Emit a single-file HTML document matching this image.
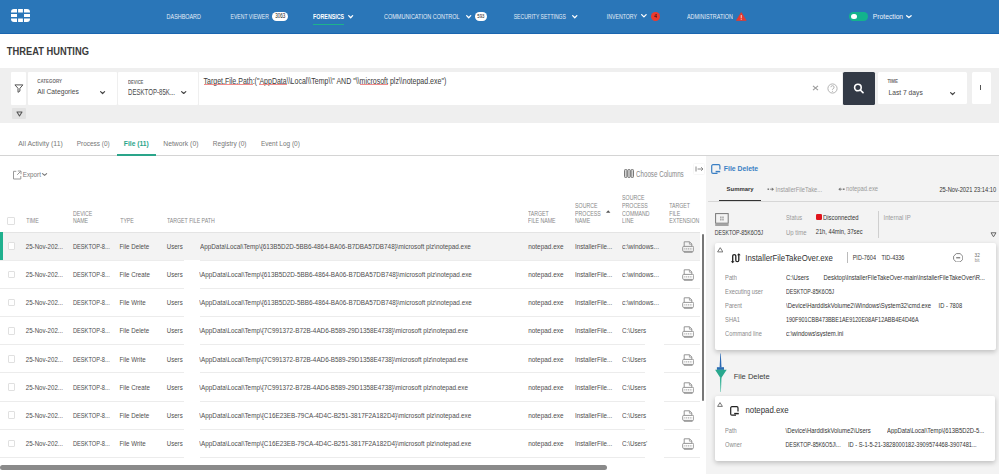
<!DOCTYPE html>
<html><head><meta charset="utf-8">
<style>
*{margin:0;padding:0;box-sizing:border-box}
html,body{width:999px;height:474px;overflow:hidden;background:#fff;font-family:"Liberation Sans",sans-serif;color:#444}
.a{position:absolute}
.t{position:absolute;white-space:nowrap;line-height:1;transform-origin:0 0}
</style></head><body>
<div class="a" style="left:0px;top:0px;width:999px;height:33px;background:#2a76b8;"></div>
<div class="a" style="left:0px;top:33px;width:999px;height:1px;background:#1a66b0;"></div>
<svg class="a" style="left:11px;top:9px" width="19" height="13" viewBox="0 0 19 13"><path d="M0 3.4V3A3 3 0 0 1 3 0H6V3.4Z M7.1 0H11.9V3.4H7.1Z M13 0H16A3 3 0 0 1 19 3V3.4H13Z M0 4.9H6V8.1H0Z M13 4.9H19V8.1H13Z M0 9.6H6V13H3A3 3 0 0 1 0 10Z M7.1 9.6H11.9V13H7.1Z M13 9.6H19V10A3 3 0 0 1 16 13H13Z" fill="#fff"/></svg>
<div class="t" style="left:166.60px;top:13.54px;font-size:5.430px;color:#e4edf7;transform:scaleY(1.334);">DASHBOARD</div>
<div class="t" style="left:230.60px;top:13.04px;font-size:5.093px;color:#e4edf7;transform:scaleY(1.423);">EVENT VIEWER</div>
<div class="a" style="left:271.8px;top:12px;width:16.2px;height:9.2px;background:#fff;border-radius:5px"></div>
<div class="t" style="left:275.30px;top:13.95px;font-size:4.539px;color:#222;transform:scaleY(1.450);">3063</div>
<div class="t" style="left:313.10px;top:13.69px;font-size:5.347px;color:#fff;font-weight:bold;transform:scaleY(1.301);">FORENSICS</div>
<svg class="a" style="left:347px;top:13.5px" width="7.300000000000011" height="5.399999999999999" viewBox="-1 -1 7.300000000000011 5.399999999999999"><path d="M0.65 0.65L2.6500000000000057 2.7499999999999987L4.650000000000011 0.65" fill="none" stroke="#fff" stroke-width="1.3" stroke-linecap="round" stroke-linejoin="round"/></svg>
<div class="a" style="left:313.3px;top:23.8px;width:31px;height:1.3px;background:#1db38b;"></div>
<div class="t" style="left:384.00px;top:13.54px;font-size:5.509px;color:#e4edf7;transform:scaleY(1.315);">COMMUNICATION CONTROL</div>
<svg class="a" style="left:464.7px;top:13.5px" width="7.400000000000034" height="5.399999999999999" viewBox="-1 -1 7.400000000000034 5.399999999999999"><path d="M0.65 0.65L2.700000000000017 2.7499999999999987L4.750000000000034 0.65" fill="none" stroke="#fff" stroke-width="1.3" stroke-linecap="round" stroke-linejoin="round"/></svg>
<div class="a" style="left:474.5px;top:11.8px;width:12.6px;height:9.3px;background:#fff;border-radius:5px"></div>
<div class="t" style="left:477.30px;top:14.00px;font-size:4.311px;color:#222;transform:scaleY(1.450);">593</div>
<div class="t" style="left:513.75px;top:13.04px;font-size:5.065px;color:#e4edf7;transform:scaleY(1.431);">SECURITY SETTINGS</div>
<svg class="a" style="left:570.5px;top:13.5px" width="7.5" height="5.399999999999999" viewBox="-1 -1 7.5 5.399999999999999"><path d="M0.65 0.65L2.75 2.7499999999999987L4.85 0.65" fill="none" stroke="#fff" stroke-width="1.3" stroke-linecap="round" stroke-linejoin="round"/></svg>
<div class="t" style="left:606.80px;top:13.04px;font-size:5.207px;color:#e4edf7;transform:scaleY(1.392);">INVENTORY</div>
<svg class="a" style="left:640.3px;top:13.3px" width="7.800000000000068" height="5.5" viewBox="-1 -1 7.800000000000068 5.5"><path d="M0.65 0.65L2.900000000000034 2.85L5.150000000000068 0.65" fill="none" stroke="#fff" stroke-width="1.3" stroke-linecap="round" stroke-linejoin="round"/></svg>
<div class="a" style="left:650.5px;top:11.75px;width:9.5px;height:9.5px;background:#ec3a2e;border-radius:50%"></div>
<div class="t" style="left:654.00px;top:14.32px;font-size:5.405px;color:#2a0a0a;transform:scaleY(1.019);">4</div>
<div class="t" style="left:687.00px;top:13.54px;font-size:5.425px;color:#e4edf7;transform:scaleY(1.336);">ADMINISTRATION</div>
<svg class="a" style="left:736px;top:11.5px" width="10.5" height="9" viewBox="0 0 10.5 9"><path d="M5.25 0.5L10.2 8.5H0.3Z" fill="#e8392e" stroke="#e8392e" stroke-width="0.6" stroke-linejoin="round"/><rect x="4.75" y="3" width="1" height="3.2" fill="#f6c9c4"/><rect x="4.75" y="6.8" width="1" height="1" fill="#f6c9c4"/></svg>
<div class="a" style="left:849.2px;top:12.4px;width:18.8px;height:8.4px;background:#13b38d;border-radius:4.2px"></div>
<div class="a" style="left:851.2px;top:13.6px;width:5.9px;height:5.9px;background:#fff;border-radius:50%"></div>
<div class="t" style="left:872.80px;top:13.09px;font-size:6.748px;color:#eef3fa;transform:scaleY(1.117);">Protection</div>
<svg class="a" style="left:905.2px;top:13.8px" width="7.7999999999999545" height="5.199999999999999" viewBox="-1 -1 7.7999999999999545 5.199999999999999"><path d="M0.65 0.65L2.8999999999999773 2.5499999999999994L5.149999999999954 0.65" fill="none" stroke="#fff" stroke-width="1.3" stroke-linecap="round" stroke-linejoin="round"/></svg>
<div class="t" style="left:6.80px;top:46.51px;font-size:9.325px;color:#3b3b3b;font-weight:bold;transform:scaleY(1.135);">THREAT HUNTING</div>
<div class="a" style="left:0px;top:67.5px;width:999px;height:55.2px;background:#efefef;"></div>
<div class="a" style="left:11.3px;top:72px;width:14.7px;height:32.5px;background:#fff;border-radius:1px"></div>
<svg class="a" style="left:14px;top:84px" width="10" height="9" viewBox="0 0 10 9"><path d="M0.9 0.9H8.9L5.9 4.3V7.1L4 8.3V4.3Z" fill="none" stroke="#555" stroke-width="1" stroke-linejoin="round"/></svg>
<div class="a" style="left:27.8px;top:72px;width:89px;height:32.5px;background:#fff;border-radius:1px"></div>
<div class="t" style="left:37.20px;top:79.91px;font-size:4.464px;color:#707070;font-weight:bold;transform:scaleY(1.104);">CATEGORY</div>
<div class="t" style="left:37.20px;top:88.17px;font-size:6.715px;color:#4a4a4a;transform:scaleY(1.144);">All Categories</div>
<svg class="a" style="left:99.3px;top:89.6px" width="7.200000000000003" height="5.1000000000000085" viewBox="-1 -1 7.200000000000003 5.1000000000000085"><path d="M0.6 0.6L2.6000000000000014 2.5000000000000084L4.600000000000003 0.6" fill="none" stroke="#444" stroke-width="1.2" stroke-linecap="round" stroke-linejoin="round"/></svg>
<div class="a" style="left:118px;top:72px;width:79.6px;height:32.5px;background:#fff;border-radius:1px"></div>
<div class="t" style="left:128.00px;top:79.91px;font-size:4.134px;color:#707070;font-weight:bold;transform:scaleY(1.192);">DEVICE</div>
<div class="t" style="left:128.00px;top:87.81px;font-size:6.100px;color:#4a4a4a;transform:scaleY(1.426);">DESKTOP-85K...</div>
<svg class="a" style="left:180px;top:89.6px" width="7.400000000000006" height="5.1000000000000085" viewBox="-1 -1 7.400000000000006 5.1000000000000085"><path d="M0.6 0.6L2.700000000000003 2.5000000000000084L4.800000000000006 0.6" fill="none" stroke="#444" stroke-width="1.2" stroke-linecap="round" stroke-linejoin="round"/></svg>
<div class="a" style="left:198.9px;top:72px;width:643.5px;height:32.5px;background:#fff;"></div>
<div class="t" style="left:203.50px;top:76.91px;font-size:7.025px;color:#3a3a3a;transform:scaleY(1.238);">Target.File.Path:(&quot;AppData\\Local\\Temp\\&quot; AND &quot;\\microsoft plz\\notepad.exe&quot;)</div>
<div class="a" style="left:203.5px;top:84px;width:49.2px;height:0.9px;background:#f08a8a;"></div>
<div class="a" style="left:259.49px;top:84px;width:27.34px;height:0.9px;background:#f08a8a;"></div>
<div class="a" style="left:359.75px;top:84px;width:28.5px;height:0.9px;background:#f08a8a;"></div>
<svg class="a" style="left:812px;top:85px" width="7" height="6" viewBox="0 0 7 6"><path d="M1 0.8L6 5.2M6 0.8L1 5.2" stroke="#999" stroke-width="1.1"/></svg>
<svg class="a" style="left:826.5px;top:82.8px" width="11" height="11" viewBox="0 0 11 11"><circle cx="5.5" cy="5.5" r="4.6" fill="none" stroke="#aaa" stroke-width="0.9"/><path d="M3.9 4.2A1.6 1.6 0 1 1 5.9 5.8C5.5 6 5.5 6.3 5.5 6.9" fill="none" stroke="#aaa" stroke-width="0.9"/><circle cx="5.5" cy="8.2" r="0.55" fill="#aaa"/></svg>
<div class="a" style="left:842.7px;top:72px;width:32.4px;height:32.6px;background:#333a46;border-radius:1.5px"></div>
<svg class="a" style="left:852px;top:82px" width="13" height="12" viewBox="0 0 13 12"><circle cx="5.9" cy="5.5" r="3.3" fill="none" stroke="#fff" stroke-width="1.6"/><path d="M8.3 8L11 10.6" stroke="#fff" stroke-width="1.7" stroke-linecap="round"/></svg>
<div class="a" style="left:878.1px;top:72.2px;width:88.7px;height:32.3px;background:#fff;border-radius:1.5px"></div>
<div class="t" style="left:887.40px;top:80.26px;font-size:4.435px;color:#707070;font-weight:bold;transform:scaleY(1.046);">TIME</div>
<div class="t" style="left:888.60px;top:89.37px;font-size:6.686px;color:#4a4a4a;transform:scaleY(1.149);">Last 7 days</div>
<svg class="a" style="left:948.8px;top:90.7px" width="7.2000000000000455" height="5.099999999999994" viewBox="-1 -1 7.2000000000000455 5.099999999999994"><path d="M0.6 0.6L2.6000000000000227 2.4999999999999942L4.600000000000046 0.6" fill="none" stroke="#444" stroke-width="1.2" stroke-linecap="round" stroke-linejoin="round"/></svg>
<div class="a" style="left:971.8px;top:72.2px;width:18.8px;height:32.3px;background:#fff;border-radius:1.5px"></div>
<div class="a" style="left:979.7px;top:84.9px;width:1.2px;height:5px;background:#555;"></div>
<div class="a" style="left:11.8px;top:108.3px;width:13.9px;height:10.6px;background:#e2e2e2;border-radius:1px"></div>
<svg class="a" style="left:15.5px;top:111px" width="7" height="6" viewBox="0 0 7 6"><path d="M1 1H6L3.5 5Z" fill="none" stroke="#555" stroke-width="1.1" stroke-linejoin="round"/></svg>
<div class="t" style="left:18.30px;top:140.99px;font-size:6.877px;color:#777;transform:scaleY(1.012);">All Activity (11)</div>
<div class="t" style="left:76.80px;top:140.49px;font-size:6.452px;color:#777;transform:scaleY(1.168);">Process (0)</div>
<div class="t" style="left:123.80px;top:140.49px;font-size:6.738px;color:#2aa58a;font-weight:bold;transform:scaleY(1.118);">File (11)</div>
<div class="t" style="left:163.30px;top:140.49px;font-size:6.809px;color:#777;transform:scaleY(1.107);">Network (0)</div>
<div class="t" style="left:212.80px;top:140.49px;font-size:6.538px;color:#777;transform:scaleY(1.153);">Registry (0)</div>
<div class="t" style="left:260.90px;top:140.49px;font-size:6.495px;color:#777;transform:scaleY(1.160);">Event Log (0)</div>
<div class="a" style="left:0px;top:155px;width:999px;height:1px;background:#d4d4d4;"></div>
<div class="a" style="left:116.9px;top:153.8px;width:39.1px;height:2px;background:#2aa58a;"></div>
<svg class="a" style="left:12px;top:170px" width="10" height="10" viewBox="0 0 10 10"><path d="M4.3 1.3H1.5V9H8.8V6" fill="none" stroke="#999" stroke-width="1"/><path d="M5.8 1H9V4.2M9 1L5.2 4.8" fill="none" stroke="#999" stroke-width="1"/></svg>
<div class="t" style="left:22.75px;top:171.94px;font-size:6.315px;color:#7a7a7a;">Export</div>
<svg class="a" style="left:41.2px;top:172.3px" width="7.199999999999996" height="4.899999999999977" viewBox="-1 -1 7.199999999999996 4.899999999999977"><path d="M0.55 0.55L2.599999999999998 2.3499999999999774L4.649999999999996 0.55" fill="none" stroke="#777" stroke-width="1.1" stroke-linecap="round" stroke-linejoin="round"/></svg>
<svg class="a" style="left:624px;top:169px" width="10" height="9" viewBox="0 0 10 9"><rect x="0.5" y="0.5" width="2.5" height="8" rx="0.9" fill="#d4d4d4" stroke="#777" stroke-width="1"/><rect x="3.75" y="0.5" width="2.5" height="8" rx="0.9" fill="#d4d4d4" stroke="#777" stroke-width="1"/><rect x="7" y="0.5" width="2.5" height="8" rx="0.9" fill="#d4d4d4" stroke="#777" stroke-width="1"/></svg>
<div class="t" style="left:636.00px;top:170.36px;font-size:6.232px;color:#888;transform:scaleY(1.349);">Choose Columns</div>
<div class="a" style="left:7.2px;top:217.2px;width:7.6px;height:7.6px;background:#fff;border:1px solid #e0e0e0;border-radius:1px"></div>
<div class="t" style="left:167.00px;top:218.46px;font-size:5.235px;color:#888;transform:scaleY(1.246);">TARGET FILE PATH</div>
<div class="t" style="left:26.20px;top:218.48px;font-size:5.235px;color:#888;transform:scaleY(1.218);">TIME</div>
<div class="t" style="left:72.90px;top:210.88px;font-size:5.235px;color:#888;transform:scaleY(1.218);">DEVICE</div>
<div class="t" style="left:72.90px;top:218.48px;font-size:5.235px;color:#888;transform:scaleY(1.218);">NAME</div>
<div class="t" style="left:120.20px;top:218.48px;font-size:5.235px;color:#888;transform:scaleY(1.218);">TYPE</div>
<div class="t" style="left:528.00px;top:210.88px;font-size:5.235px;color:#888;transform:scaleY(1.218);">TARGET</div>
<div class="t" style="left:528.00px;top:218.48px;font-size:5.235px;color:#888;transform:scaleY(1.218);">FILE NAME</div>
<div class="t" style="left:575.10px;top:203.08px;font-size:5.235px;color:#888;transform:scaleY(1.218);">SOURCE</div>
<div class="t" style="left:575.10px;top:210.88px;font-size:5.235px;color:#888;transform:scaleY(1.218);">PROCESS</div>
<div class="t" style="left:575.10px;top:218.48px;font-size:5.235px;color:#888;transform:scaleY(1.218);">NAME</div>
<svg class="a" style="left:606.3px;top:209.6px" width="4.4" height="3" viewBox="0 0 4.4 3"><path d="M0 2.8L2.2 0.2L4.4 2.8Z" fill="#555"/></svg>
<div class="t" style="left:622.10px;top:195.38px;font-size:5.235px;color:#888;transform:scaleY(1.218);">SOURCE</div>
<div class="t" style="left:622.10px;top:203.08px;font-size:5.235px;color:#888;transform:scaleY(1.218);">PROCESS</div>
<div class="t" style="left:622.10px;top:210.88px;font-size:5.235px;color:#888;transform:scaleY(1.218);">COMMAND</div>
<div class="t" style="left:622.10px;top:218.48px;font-size:5.235px;color:#888;transform:scaleY(1.218);">LINE</div>
<div class="t" style="left:669.20px;top:203.08px;font-size:5.235px;color:#888;transform:scaleY(1.218);">TARGET</div>
<div class="t" style="left:669.20px;top:210.88px;font-size:5.235px;color:#888;transform:scaleY(1.218);">FILE</div>
<div class="t" style="left:669.20px;top:218.48px;font-size:5.235px;color:#888;transform:scaleY(1.218);">EXTENSION</div>
<div class="a" style="left:0px;top:231.8px;width:700px;height:1px;background:#e4e4e4;"></div>
<div class="a" style="left:0px;top:232.8px;width:700px;height:27.4px;background:#f3f3f3;"></div>
<div class="a" style="left:0px;top:231.8px;width:3px;height:28.4px;background:#1fb08e;"></div>
<div class="a" style="left:0px;top:259.68px;width:183.5px;height:1px;background:#ececec;"></div>
<div class="a" style="left:199.5px;top:259.68px;width:500.5px;height:1px;background:#ececec;"></div>
<div class="a" style="left:7.8px;top:242.4px;width:7.6px;height:7.6px;background:#fff;border:1px solid #e0e0e0;border-radius:1px"></div>
<div class="t" style="left:25.80px;top:242.94px;font-size:6.139px;color:#4e4e4e;transform:scaleY(1.180);">25-Nov-202...</div>
<div class="t" style="left:72.90px;top:243.84px;font-size:5.705px;color:#4e4e4e;transform:scaleY(1.270);">DESKTOP-8...</div>
<div class="t" style="left:119.60px;top:242.94px;font-size:6.192px;color:#4e4e4e;transform:scaleY(1.170);">File Delete</div>
<div class="t" style="left:166.80px;top:242.94px;font-size:6.092px;color:#4e4e4e;transform:scaleY(1.189);">Users</div>
<div class="t" style="left:200.00px;top:242.94px;font-size:6.357px;color:#4e4e4e;transform:scaleY(1.140);">AppData\Local\Temp\{613B5D2D-5BB6-4864-BA06-B7DBA57DB748}\microsoft plz\notepad.exe</div>
<div class="t" style="left:528.20px;top:242.94px;font-size:6.431px;color:#4e4e4e;transform:scaleY(1.127);">notepad.exe</div>
<div class="t" style="left:575.00px;top:242.94px;font-size:6.274px;color:#4e4e4e;transform:scaleY(1.155);">InstallerFile...</div>
<div class="t" style="left:622.00px;top:242.94px;font-size:6.463px;color:#4e4e4e;transform:scaleY(1.121);">c:\windows...</div>
<svg class="a" style="left:681.5px;top:241.0px" width="12.5" height="12" viewBox="0 0 12.5 12"><path d="M2.2 5.2V0.8H7.6L9.8 3V5.2" fill="none" stroke="#8a8a8a" stroke-width="0.9"/><path d="M7.4 0.8V3.2H9.8" fill="none" stroke="#8a8a8a" stroke-width="0.7"/><rect x="0.7" y="5.4" width="11" height="5" rx="1" fill="none" stroke="#8a8a8a" stroke-width="0.9"/><path d="M2.3 7.9H10.2" stroke="#8a8a8a" stroke-width="0.9" stroke-dasharray="1.1 0.7"/><path d="M2.2 10.6V11.4H10.3V10.6" fill="none" stroke="#8a8a8a" stroke-width="0.8"/></svg>
<div class="a" style="left:0px;top:287.86px;width:183.5px;height:1px;background:#ececec;"></div>
<div class="a" style="left:199.5px;top:287.86px;width:500.5px;height:1px;background:#ececec;"></div>
<div class="a" style="left:7.8px;top:270.58px;width:7.6px;height:7.6px;background:#fff;border:1px solid #e0e0e0;border-radius:1px"></div>
<div class="t" style="left:25.80px;top:271.12px;font-size:6.139px;color:#4e4e4e;transform:scaleY(1.180);">25-Nov-202...</div>
<div class="t" style="left:72.90px;top:272.02px;font-size:5.705px;color:#4e4e4e;transform:scaleY(1.270);">DESKTOP-8...</div>
<div class="t" style="left:119.60px;top:271.12px;font-size:6.192px;color:#4e4e4e;transform:scaleY(1.170);">File Create</div>
<div class="t" style="left:166.80px;top:271.12px;font-size:6.092px;color:#4e4e4e;transform:scaleY(1.189);">Users</div>
<div class="t" style="left:199.30px;top:271.12px;font-size:6.357px;color:#4e4e4e;transform:scaleY(1.140);">\AppData\Local\Temp\{613B5D2D-5BB6-4864-BA06-B7DBA57DB748}\microsoft plz\notepad.exe</div>
<div class="t" style="left:528.20px;top:271.12px;font-size:6.431px;color:#4e4e4e;transform:scaleY(1.127);">notepad.exe</div>
<div class="t" style="left:575.00px;top:271.12px;font-size:6.274px;color:#4e4e4e;transform:scaleY(1.155);">InstallerFile...</div>
<div class="t" style="left:622.00px;top:271.12px;font-size:6.463px;color:#4e4e4e;transform:scaleY(1.121);">c:\windows...</div>
<svg class="a" style="left:681.5px;top:269.2px" width="12.5" height="12" viewBox="0 0 12.5 12"><path d="M2.2 5.2V0.8H7.6L9.8 3V5.2" fill="none" stroke="#8a8a8a" stroke-width="0.9"/><path d="M7.4 0.8V3.2H9.8" fill="none" stroke="#8a8a8a" stroke-width="0.7"/><rect x="0.7" y="5.4" width="11" height="5" rx="1" fill="none" stroke="#8a8a8a" stroke-width="0.9"/><path d="M2.3 7.9H10.2" stroke="#8a8a8a" stroke-width="0.9" stroke-dasharray="1.1 0.7"/><path d="M2.2 10.6V11.4H10.3V10.6" fill="none" stroke="#8a8a8a" stroke-width="0.8"/></svg>
<div class="a" style="left:0px;top:316.03999999999996px;width:183.5px;height:1px;background:#ececec;"></div>
<div class="a" style="left:199.5px;top:316.03999999999996px;width:500.5px;height:1px;background:#ececec;"></div>
<div class="a" style="left:7.8px;top:298.76px;width:7.6px;height:7.6px;background:#fff;border:1px solid #e0e0e0;border-radius:1px"></div>
<div class="t" style="left:25.80px;top:299.30px;font-size:6.139px;color:#4e4e4e;transform:scaleY(1.180);">25-Nov-202...</div>
<div class="t" style="left:72.90px;top:300.20px;font-size:5.705px;color:#4e4e4e;transform:scaleY(1.270);">DESKTOP-8...</div>
<div class="t" style="left:119.60px;top:299.30px;font-size:6.192px;color:#4e4e4e;transform:scaleY(1.170);">File Write</div>
<div class="t" style="left:166.80px;top:299.30px;font-size:6.092px;color:#4e4e4e;transform:scaleY(1.189);">Users</div>
<div class="t" style="left:199.30px;top:299.30px;font-size:6.357px;color:#4e4e4e;transform:scaleY(1.140);">\AppData\Local\Temp\{613B5D2D-5BB6-4864-BA06-B7DBA57DB748}\microsoft plz\notepad.exe</div>
<div class="t" style="left:528.20px;top:299.30px;font-size:6.431px;color:#4e4e4e;transform:scaleY(1.127);">notepad.exe</div>
<div class="t" style="left:575.00px;top:299.30px;font-size:6.274px;color:#4e4e4e;transform:scaleY(1.155);">InstallerFile...</div>
<div class="t" style="left:622.00px;top:299.30px;font-size:6.463px;color:#4e4e4e;transform:scaleY(1.121);">c:\windows...</div>
<svg class="a" style="left:681.5px;top:297.4px" width="12.5" height="12" viewBox="0 0 12.5 12"><path d="M2.2 5.2V0.8H7.6L9.8 3V5.2" fill="none" stroke="#8a8a8a" stroke-width="0.9"/><path d="M7.4 0.8V3.2H9.8" fill="none" stroke="#8a8a8a" stroke-width="0.7"/><rect x="0.7" y="5.4" width="11" height="5" rx="1" fill="none" stroke="#8a8a8a" stroke-width="0.9"/><path d="M2.3 7.9H10.2" stroke="#8a8a8a" stroke-width="0.9" stroke-dasharray="1.1 0.7"/><path d="M2.2 10.6V11.4H10.3V10.6" fill="none" stroke="#8a8a8a" stroke-width="0.8"/></svg>
<div class="a" style="left:0px;top:344.22px;width:183.5px;height:1px;background:#ececec;"></div>
<div class="a" style="left:199.5px;top:344.22px;width:445.5px;height:1px;background:#ececec;"></div>
<div class="a" style="left:663.5px;top:344.22px;width:36.5px;height:1px;background:#ececec;"></div>
<div class="a" style="left:7.8px;top:326.94px;width:7.6px;height:7.6px;background:#fff;border:1px solid #e0e0e0;border-radius:1px"></div>
<div class="t" style="left:25.80px;top:327.48px;font-size:6.139px;color:#4e4e4e;transform:scaleY(1.180);">25-Nov-202...</div>
<div class="t" style="left:72.90px;top:328.38px;font-size:5.705px;color:#4e4e4e;transform:scaleY(1.270);">DESKTOP-8...</div>
<div class="t" style="left:119.60px;top:327.48px;font-size:6.192px;color:#4e4e4e;transform:scaleY(1.170);">File Delete</div>
<div class="t" style="left:166.80px;top:327.48px;font-size:6.092px;color:#4e4e4e;transform:scaleY(1.189);">Users</div>
<div class="t" style="left:199.30px;top:327.48px;font-size:6.357px;color:#4e4e4e;transform:scaleY(1.140);">\AppData\Local\Temp\{7C991372-B72B-4AD6-B589-29D1358E4738}\microsoft plz\notepad.exe</div>
<div class="t" style="left:528.20px;top:327.48px;font-size:6.431px;color:#4e4e4e;transform:scaleY(1.127);">notepad.exe</div>
<div class="t" style="left:575.00px;top:327.48px;font-size:6.274px;color:#4e4e4e;transform:scaleY(1.155);">InstallerFile...</div>
<div class="t" style="left:622.00px;top:327.48px;font-size:6.200px;color:#4e4e4e;transform:scaleY(1.169);">C:\Users</div>
<svg class="a" style="left:681.5px;top:325.5px" width="12.5" height="12" viewBox="0 0 12.5 12"><path d="M2.2 5.2V0.8H7.6L9.8 3V5.2" fill="none" stroke="#8a8a8a" stroke-width="0.9"/><path d="M7.4 0.8V3.2H9.8" fill="none" stroke="#8a8a8a" stroke-width="0.7"/><rect x="0.7" y="5.4" width="11" height="5" rx="1" fill="none" stroke="#8a8a8a" stroke-width="0.9"/><path d="M2.3 7.9H10.2" stroke="#8a8a8a" stroke-width="0.9" stroke-dasharray="1.1 0.7"/><path d="M2.2 10.6V11.4H10.3V10.6" fill="none" stroke="#8a8a8a" stroke-width="0.8"/></svg>
<div class="a" style="left:0px;top:372.4px;width:183.5px;height:1px;background:#ececec;"></div>
<div class="a" style="left:199.5px;top:372.4px;width:445.5px;height:1px;background:#ececec;"></div>
<div class="a" style="left:663.5px;top:372.4px;width:36.5px;height:1px;background:#ececec;"></div>
<div class="a" style="left:7.8px;top:355.12px;width:7.6px;height:7.6px;background:#fff;border:1px solid #e0e0e0;border-radius:1px"></div>
<div class="t" style="left:25.80px;top:355.66px;font-size:6.139px;color:#4e4e4e;transform:scaleY(1.180);">25-Nov-202...</div>
<div class="t" style="left:72.90px;top:356.56px;font-size:5.705px;color:#4e4e4e;transform:scaleY(1.270);">DESKTOP-8...</div>
<div class="t" style="left:119.60px;top:355.66px;font-size:6.192px;color:#4e4e4e;transform:scaleY(1.170);">File Write</div>
<div class="t" style="left:166.80px;top:355.66px;font-size:6.092px;color:#4e4e4e;transform:scaleY(1.189);">Users</div>
<div class="t" style="left:199.30px;top:355.66px;font-size:6.357px;color:#4e4e4e;transform:scaleY(1.140);">\AppData\Local\Temp\{7C991372-B72B-4AD6-B589-29D1358E4738}\microsoft plz\notepad.exe</div>
<div class="t" style="left:528.20px;top:355.66px;font-size:6.431px;color:#4e4e4e;transform:scaleY(1.127);">notepad.exe</div>
<div class="t" style="left:575.00px;top:355.66px;font-size:6.274px;color:#4e4e4e;transform:scaleY(1.155);">InstallerFile...</div>
<div class="t" style="left:622.00px;top:355.66px;font-size:6.200px;color:#4e4e4e;transform:scaleY(1.169);">C:\Users</div>
<svg class="a" style="left:681.5px;top:353.7px" width="12.5" height="12" viewBox="0 0 12.5 12"><path d="M2.2 5.2V0.8H7.6L9.8 3V5.2" fill="none" stroke="#8a8a8a" stroke-width="0.9"/><path d="M7.4 0.8V3.2H9.8" fill="none" stroke="#8a8a8a" stroke-width="0.7"/><rect x="0.7" y="5.4" width="11" height="5" rx="1" fill="none" stroke="#8a8a8a" stroke-width="0.9"/><path d="M2.3 7.9H10.2" stroke="#8a8a8a" stroke-width="0.9" stroke-dasharray="1.1 0.7"/><path d="M2.2 10.6V11.4H10.3V10.6" fill="none" stroke="#8a8a8a" stroke-width="0.8"/></svg>
<div class="a" style="left:0px;top:400.58px;width:183.5px;height:1px;background:#ececec;"></div>
<div class="a" style="left:199.5px;top:400.58px;width:445.5px;height:1px;background:#ececec;"></div>
<div class="a" style="left:663.5px;top:400.58px;width:36.5px;height:1px;background:#ececec;"></div>
<div class="a" style="left:7.8px;top:383.3px;width:7.6px;height:7.6px;background:#fff;border:1px solid #e0e0e0;border-radius:1px"></div>
<div class="t" style="left:25.80px;top:383.84px;font-size:6.139px;color:#4e4e4e;transform:scaleY(1.180);">25-Nov-202...</div>
<div class="t" style="left:72.90px;top:384.74px;font-size:5.705px;color:#4e4e4e;transform:scaleY(1.270);">DESKTOP-8...</div>
<div class="t" style="left:119.60px;top:383.84px;font-size:6.192px;color:#4e4e4e;transform:scaleY(1.170);">File Create</div>
<div class="t" style="left:166.80px;top:383.84px;font-size:6.092px;color:#4e4e4e;transform:scaleY(1.189);">Users</div>
<div class="t" style="left:199.30px;top:383.84px;font-size:6.357px;color:#4e4e4e;transform:scaleY(1.140);">\AppData\Local\Temp\{7C991372-B72B-4AD6-B589-29D1358E4738}\microsoft plz\notepad.exe</div>
<div class="t" style="left:528.20px;top:383.84px;font-size:6.431px;color:#4e4e4e;transform:scaleY(1.127);">notepad.exe</div>
<div class="t" style="left:575.00px;top:383.84px;font-size:6.274px;color:#4e4e4e;transform:scaleY(1.155);">InstallerFile...</div>
<div class="t" style="left:622.00px;top:383.84px;font-size:6.200px;color:#4e4e4e;transform:scaleY(1.169);">C:\Users</div>
<svg class="a" style="left:681.5px;top:381.9px" width="12.5" height="12" viewBox="0 0 12.5 12"><path d="M2.2 5.2V0.8H7.6L9.8 3V5.2" fill="none" stroke="#8a8a8a" stroke-width="0.9"/><path d="M7.4 0.8V3.2H9.8" fill="none" stroke="#8a8a8a" stroke-width="0.7"/><rect x="0.7" y="5.4" width="11" height="5" rx="1" fill="none" stroke="#8a8a8a" stroke-width="0.9"/><path d="M2.3 7.9H10.2" stroke="#8a8a8a" stroke-width="0.9" stroke-dasharray="1.1 0.7"/><path d="M2.2 10.6V11.4H10.3V10.6" fill="none" stroke="#8a8a8a" stroke-width="0.8"/></svg>
<div class="a" style="left:0px;top:428.76px;width:183.5px;height:1px;background:#ececec;"></div>
<div class="a" style="left:199.5px;top:428.76px;width:445.5px;height:1px;background:#ececec;"></div>
<div class="a" style="left:663.5px;top:428.76px;width:36.5px;height:1px;background:#ececec;"></div>
<div class="a" style="left:7.8px;top:411.48px;width:7.6px;height:7.6px;background:#fff;border:1px solid #e0e0e0;border-radius:1px"></div>
<div class="t" style="left:25.80px;top:412.02px;font-size:6.139px;color:#4e4e4e;transform:scaleY(1.180);">25-Nov-202...</div>
<div class="t" style="left:72.90px;top:412.92px;font-size:5.705px;color:#4e4e4e;transform:scaleY(1.270);">DESKTOP-8...</div>
<div class="t" style="left:119.60px;top:412.02px;font-size:6.192px;color:#4e4e4e;transform:scaleY(1.170);">File Delete</div>
<div class="t" style="left:166.80px;top:412.02px;font-size:6.092px;color:#4e4e4e;transform:scaleY(1.189);">Users</div>
<div class="t" style="left:199.30px;top:412.02px;font-size:6.357px;color:#4e4e4e;transform:scaleY(1.140);">\AppData\Local\Temp\{C16E23EB-79CA-4D4C-B251-3817F2A182D4}\microsoft plz\notepad.exe</div>
<div class="t" style="left:528.20px;top:412.02px;font-size:6.431px;color:#4e4e4e;transform:scaleY(1.127);">notepad.exe</div>
<div class="t" style="left:575.00px;top:412.02px;font-size:6.274px;color:#4e4e4e;transform:scaleY(1.155);">InstallerFile...</div>
<div class="t" style="left:622.00px;top:412.02px;font-size:6.200px;color:#4e4e4e;transform:scaleY(1.169);">C:\Users</div>
<svg class="a" style="left:681.5px;top:410.1px" width="12.5" height="12" viewBox="0 0 12.5 12"><path d="M2.2 5.2V0.8H7.6L9.8 3V5.2" fill="none" stroke="#8a8a8a" stroke-width="0.9"/><path d="M7.4 0.8V3.2H9.8" fill="none" stroke="#8a8a8a" stroke-width="0.7"/><rect x="0.7" y="5.4" width="11" height="5" rx="1" fill="none" stroke="#8a8a8a" stroke-width="0.9"/><path d="M2.3 7.9H10.2" stroke="#8a8a8a" stroke-width="0.9" stroke-dasharray="1.1 0.7"/><path d="M2.2 10.6V11.4H10.3V10.6" fill="none" stroke="#8a8a8a" stroke-width="0.8"/></svg>
<div class="a" style="left:0px;top:456.94px;width:183.5px;height:1px;background:#ececec;"></div>
<div class="a" style="left:199.5px;top:456.94px;width:445.5px;height:1px;background:#ececec;"></div>
<div class="a" style="left:663.5px;top:456.94px;width:36.5px;height:1px;background:#ececec;"></div>
<div class="a" style="left:7.8px;top:439.65999999999997px;width:7.6px;height:7.6px;background:#fff;border:1px solid #e0e0e0;border-radius:1px"></div>
<div class="t" style="left:25.80px;top:440.20px;font-size:6.139px;color:#4e4e4e;transform:scaleY(1.180);">25-Nov-202...</div>
<div class="t" style="left:72.90px;top:441.10px;font-size:5.705px;color:#4e4e4e;transform:scaleY(1.270);">DESKTOP-8...</div>
<div class="t" style="left:119.60px;top:440.20px;font-size:6.192px;color:#4e4e4e;transform:scaleY(1.170);">File Write</div>
<div class="t" style="left:166.80px;top:440.20px;font-size:6.092px;color:#4e4e4e;transform:scaleY(1.189);">Users</div>
<div class="t" style="left:199.30px;top:440.20px;font-size:6.357px;color:#4e4e4e;transform:scaleY(1.140);">\AppData\Local\Temp\{C16E23EB-79CA-4D4C-B251-3817F2A182D4}\microsoft plz\notepad.exe</div>
<div class="t" style="left:528.20px;top:440.20px;font-size:6.431px;color:#4e4e4e;transform:scaleY(1.127);">notepad.exe</div>
<div class="t" style="left:575.00px;top:440.20px;font-size:6.274px;color:#4e4e4e;transform:scaleY(1.155);">InstallerFile...</div>
<div class="t" style="left:622.00px;top:440.20px;font-size:6.200px;color:#4e4e4e;transform:scaleY(1.169);">C:\Users&#x27;</div>
<svg class="a" style="left:681.5px;top:438.3px" width="12.5" height="12" viewBox="0 0 12.5 12"><path d="M2.2 5.2V0.8H7.6L9.8 3V5.2" fill="none" stroke="#8a8a8a" stroke-width="0.9"/><path d="M7.4 0.8V3.2H9.8" fill="none" stroke="#8a8a8a" stroke-width="0.7"/><rect x="0.7" y="5.4" width="11" height="5" rx="1" fill="none" stroke="#8a8a8a" stroke-width="0.9"/><path d="M2.3 7.9H10.2" stroke="#8a8a8a" stroke-width="0.9" stroke-dasharray="1.1 0.7"/><path d="M2.2 10.6V11.4H10.3V10.6" fill="none" stroke="#8a8a8a" stroke-width="0.8"/></svg>
<div class="a" style="left:701.8px;top:234.2px;width:2px;height:167px;background:#777;border-radius:1px"></div>
<div class="a" style="left:0px;top:465px;width:607px;height:5.2px;background:#8a8a8a;border-radius:2.6px"></div>
<div class="a" style="left:705.5px;top:156px;width:293.5px;height:318px;background:#f3f3f3;"></div>
<div class="a" style="left:693.5px;top:163.5px;width:10.7px;height:10px;background:#fff;box-shadow:0 0 1.5px rgba(0,0,0,0.12)"></div>
<svg class="a" style="left:694.5px;top:165.5px" width="9" height="6" viewBox="0 0 9 6"><path d="M1 0.5V5.5" stroke="#888" stroke-width="1"/><path d="M2.6 3H8M6.2 1.2L8 3L6.2 4.8" fill="none" stroke="#888" stroke-width="1"/></svg>
<svg class="a" style="left:710.5px;top:163.8px" width="10" height="10" viewBox="0 0 10 10"><path d="M6.5 9.3H2A1.3 1.3 0 0 1 0.7 8V2A1.3 1.3 0 0 1 2 0.7H7.6A1.3 1.3 0 0 1 8.9 2V5.5" fill="none" stroke="#3a7fc4" stroke-width="1.2"/><path d="M4.6 7.6H9.2" stroke="#3a7fc4" stroke-width="1.5"/></svg>
<div class="t" style="left:723.80px;top:166.14px;font-size:6.880px;color:#3a7fc4;font-weight:bold;transform:scaleY(1.053);">File Delete</div>
<div class="t" style="left:726.60px;top:186.73px;font-size:5.921px;color:#333;font-weight:bold;transform:scaleY(1.028);">Summary</div>
<div class="a" style="left:719.2px;top:199.9px;width:41.5px;height:1.8px;background:#333;"></div>
<div class="a" style="left:708px;top:201px;width:291px;height:0.9px;background:#d6d6d6;"></div>
<svg class="a" style="left:767.3px;top:187px" width="7.5" height="4.4" viewBox="0 0 7.5 4.4"><path d="M0.5 2.2H2" stroke="#777" stroke-width="1.5"/><path d="M2.8 2.2H6.2" stroke="#888" stroke-width="0.9"/><path d="M4.8 0.4L7 2.2L4.8 4Z" fill="#777"/></svg>
<div class="t" style="left:775.60px;top:186.86px;font-size:5.782px;color:#9a9a9a;transform:scaleY(1.128);">InstallerFileTake...</div>
<svg class="a" style="left:837.5px;top:187px" width="7" height="4.4" viewBox="0 0 7 4.4"><path d="M1.5 2.2H4.5" stroke="#888" stroke-width="0.9"/><path d="M2.5 0.4L0.3 2.2L2.5 4Z" fill="#777"/><path d="M5 2.2H6.6" stroke="#777" stroke-width="1.5"/></svg>
<div class="t" style="left:846.00px;top:186.86px;font-size:5.849px;color:#9a9a9a;transform:scaleY(1.115);">notepad.exe</div>
<div class="t" style="left:939.40px;top:186.86px;font-size:5.719px;color:#333;transform:scaleY(1.140);">25-Nov-2021 23:14:10</div>
<svg class="a" style="left:714.5px;top:212.8px" width="14" height="13" viewBox="0 0 14 13"><rect x="0.6" y="0.6" width="12.6" height="9.6" fill="none" stroke="#777" stroke-width="1"/><path d="M0.2 12H13.6" stroke="#777" stroke-width="1.3"/><path d="M5 3.6H6.6V5.2H5ZM7.2 3.6H8.8V5.2H7.2ZM5 5.8H6.6V7.4H5ZM7.2 5.8H8.8V7.4H7.2Z" fill="#aaa"/></svg>
<div class="t" style="left:714.70px;top:229.28px;font-size:5.246px;color:#383838;transform:scaleY(1.450);">DESKTOP-85K6O5J</div>
<div class="t" style="left:786.00px;top:214.99px;font-size:5.714px;color:#9a9a9a;transform:scaleY(1.217);">Status</div>
<div class="a" style="left:816.1px;top:213.9px;width:5.7px;height:5.9px;background:#e0141c;border-radius:1.3px"></div>
<div class="t" style="left:823.00px;top:214.99px;font-size:5.875px;color:#333;transform:scaleY(1.184);">Disconnected</div>
<div class="t" style="left:786.00px;top:228.99px;font-size:5.980px;color:#9a9a9a;transform:scaleY(1.163);">Up time</div>
<div class="t" style="left:815.70px;top:228.99px;font-size:5.741px;color:#333;transform:scaleY(1.212);">21h, 44min, 37sec</div>
<div class="a" style="left:877.6px;top:211px;width:0.9px;height:27px;background:#cfcfcf;"></div>
<div class="t" style="left:883.50px;top:214.99px;font-size:5.965px;color:#9a9a9a;transform:scaleY(1.166);">Internal IP</div>
<svg class="a" style="left:989.5px;top:231.5px" width="7" height="5.5" viewBox="0 0 7 5.5"><path d="M1 0.8H6L3.5 4.8Z" fill="none" stroke="#666" stroke-width="1" stroke-linejoin="round"/></svg>
<div class="a" style="left:714.9px;top:242.6px;width:281.6px;height:107.9px;background:#fff;border-radius:2px;box-shadow:0 2px 5px rgba(0,0,0,0.22)"></div>
<svg class="a" style="left:716.5px;top:247.3px" width="6.5" height="5.5" viewBox="0 0 6.5 5.5"><path d="M3.25 0.7L5.9 4.9H0.6Z" fill="none" stroke="#666" stroke-width="0.9" stroke-linejoin="round"/></svg>
<svg class="a" style="left:729.5px;top:252.5px" width="11" height="11" viewBox="0 0 11 11"><path d="M2.7 9V3.1A1.55 1.55 0 0 1 5.8 3.1V7.2A1.5 1.5 0 0 0 8.8 7.2V1.6" fill="none" stroke="#222" stroke-width="1.3"/><path d="M0.8 8.3H4.6L2.7 10.3Z" fill="#222"/><path d="M6.9 2.3H10.7L8.8 0.3Z" fill="#222"/></svg>
<div class="t" style="left:745.30px;top:253.83px;font-size:7.813px;color:#333;transform:scaleY(1.094);">InstallerFileTakeOver.exe</div>
<div class="a" style="left:847.2px;top:252px;width:0.9px;height:11.2px;background:#bbb;"></div>
<div class="t" style="left:852.70px;top:254.79px;font-size:5.538px;color:#333;transform:scaleY(1.256);">PID-7604</div>
<div class="t" style="left:881.40px;top:254.79px;font-size:5.540px;color:#333;transform:scaleY(1.256);">TID-4336</div>
<svg class="a" style="left:953px;top:252.8px" width="10.4" height="9.6" viewBox="0 0 10.4 9.6"><path d="M3.3 0.6H7.1L9.8 3.2V6.4L7.1 9H3.3L0.6 6.4V3.2Z" fill="none" stroke="#777" stroke-width="0.9" stroke-linejoin="round"/><path d="M3.2 4.8H7.2" stroke="#555" stroke-width="1"/></svg>
<div class="t" style="left:974.60px;top:252.82px;font-size:4.685px;color:#666;transform:scaleY(1.176);">32</div>
<div class="t" style="left:974.80px;top:258.69px;font-size:4.455px;color:#888;">bit</div>
<div class="t" style="left:725.10px;top:288.66px;font-size:5.714px;color:#8a8a8a;transform:scaleY(1.243);">Executing user</div>
<div class="t" style="left:725.10px;top:274.56px;font-size:5.714px;color:#8a8a8a;transform:scaleY(1.243);">Path</div>
<div class="t" style="left:725.10px;top:302.96px;font-size:5.714px;color:#8a8a8a;transform:scaleY(1.243);">Parent</div>
<div class="t" style="left:725.10px;top:316.56px;font-size:5.714px;color:#8a8a8a;transform:scaleY(1.243);">SHA1</div>
<div class="t" style="left:725.10px;top:330.86px;font-size:5.714px;color:#8a8a8a;transform:scaleY(1.243);">Command line</div>
<div class="t" style="left:786.00px;top:302.96px;font-size:5.923px;color:#333;transform:scaleY(1.199);">\Device\HarddiskVolume2\Windows\System32\cmd.exe</div>
<div class="t" style="left:786.00px;top:274.56px;font-size:5.923px;color:#333;transform:scaleY(1.199);">C:\Users</div>
<div class="t" style="left:823.50px;top:274.56px;font-size:5.913px;color:#333;transform:scaleY(1.201);">Desktop\InstallerFileTakeOver-main\InstallerFileTakeOver\R...</div>
<div class="t" style="left:786.00px;top:288.66px;font-size:5.213px;color:#333;transform:scaleY(1.362);">DESKTOP-85K6O5J</div>
<div class="t" style="left:938.60px;top:302.96px;font-size:5.735px;color:#333;transform:scaleY(1.238);">ID - 7808</div>
<div class="t" style="left:786.00px;top:316.56px;font-size:5.473px;color:#333;transform:scaleY(1.297);">190F901CBB473BBE1AE9120E08AF12ABB4E4D46A</div>
<div class="t" style="left:786.00px;top:330.86px;font-size:5.970px;color:#333;transform:scaleY(1.190);">c:\windows\system.ini</div>
<svg class="a" style="left:714px;top:353px" width="14" height="40" viewBox="0 0 14 40"><path d="M6.3 0.6H6.8L7.5 14.5H5.6Z" fill="#2a69b3"/><path d="M2.9 14.2H10V16.9H2.9Z" fill="#2b6cb2"/><path d="M1.1 16.8H12.7L7.1 25.3Q6.9 25.7 6.6 25.3Z" fill="#29a88e"/><path d="M5.9 24.5H7.5L6.9 39H6.5Z" fill="#35b296"/></svg>
<div class="t" style="left:733.70px;top:373.20px;font-size:7.531px;color:#3a3a3a;transform:scaleY(1.078);">File Delete</div>
<div class="a" style="left:715.3px;top:395.7px;width:280.2px;height:65.5px;background:#fff;border-radius:2px;box-shadow:0 2px 5px rgba(0,0,0,0.22)"></div>
<svg class="a" style="left:717.3px;top:401.5px" width="6" height="5" viewBox="0 0 6 5"><path d="M3 0.6L5.4 4.4H0.6Z" fill="none" stroke="#666" stroke-width="0.9" stroke-linejoin="round"/></svg>
<svg class="a" style="left:730px;top:406px" width="10" height="10" viewBox="0 0 10 10"><path d="M6 9.2H1.9A1.2 1.2 0 0 1 0.7 8V1.9A1.2 1.2 0 0 1 1.9 0.7H6.8A1.2 1.2 0 0 1 8 1.9V5.6" fill="none" stroke="#222" stroke-width="1.2"/><path d="M4.2 7.6H8.8" stroke="#222" stroke-width="1.5"/></svg>
<div class="t" style="left:745.50px;top:406.03px;font-size:7.829px;color:#333;transform:scaleY(1.092);">notepad.exe</div>
<div class="t" style="left:725.00px;top:441.79px;font-size:5.714px;color:#8a8a8a;transform:scaleY(1.217);">Owner</div>
<div class="t" style="left:725.00px;top:427.59px;font-size:5.714px;color:#8a8a8a;transform:scaleY(1.217);">Path</div>
<div class="t" style="left:785.50px;top:427.59px;font-size:5.948px;color:#333;transform:scaleY(1.169);">\Device\HarddiskVolume2\Users</div>
<div class="t" style="left:887.00px;top:427.59px;font-size:5.906px;color:#333;transform:scaleY(1.178);">AppData\Local\Temp\{613B5D2D-5...</div>
<div class="t" style="left:785.50px;top:441.79px;font-size:5.349px;color:#333;transform:scaleY(1.300);">DESKTOP-85K6O5J\...</div>
<div class="t" style="left:848.00px;top:441.79px;font-size:5.700px;color:#333;transform:scaleY(1.220);">ID - S-1-5-21-3828000182-3909574468-3907481...</div>
</body></html>
